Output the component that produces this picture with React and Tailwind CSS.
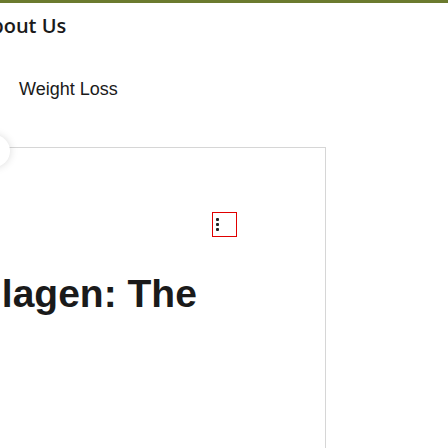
import React from "react";

function App() {
  return (
    <div className="relative h-[448px] w-[448px] overflow-hidden border-t-[3px] border-[#6b7a2e] bg-white">
      <div className="ml-[-22px] mt-[12px] whitespace-nowrap font-['Open_Sans',sans-serif] text-[20px] font-semibold leading-[22px] text-[#1a1a1a]">
        About Us
      </div>

      <div className="ml-[19px] mt-[41px] font-['Liberation_Sans',Arial,sans-serif] text-[18px] leading-[22px] text-[#1a1a1a]">
        Weight Loss
      </div>

      <div className="relative ml-[-40px] mt-[47px] h-[320px] w-[366px] border-r border-t border-[#d6d6d6]">
        <div className="ml-[252px] mt-[64px] flex h-[25px] w-[25px] flex-col gap-[2px] border border-[#e00000] pl-[3px] pt-[5px]">
          <span className="block h-[3px] w-[3px] rounded-[1px] bg-[#222]" />
          <span className="block h-[3px] w-[3px] rounded-[1px] bg-[#222]" />
          <span className="block h-[3px] w-[3px] rounded-[1px] bg-[#222]" />
        </div>

        <h1 className="ml-[-21px] mt-[34px] whitespace-nowrap font-['Liberation_Sans',Arial,sans-serif] text-[39px] font-bold leading-[46px] text-[#1a1a1a]">
          Collagen: The
        </h1>
      </div>

      <div className="absolute left-[-22px] top-[132px] h-[32px] w-[32px] rounded-full bg-white shadow-[0_0_8px_rgba(0,0,0,0.15)]" />
    </div>
  );
}

export default App;
